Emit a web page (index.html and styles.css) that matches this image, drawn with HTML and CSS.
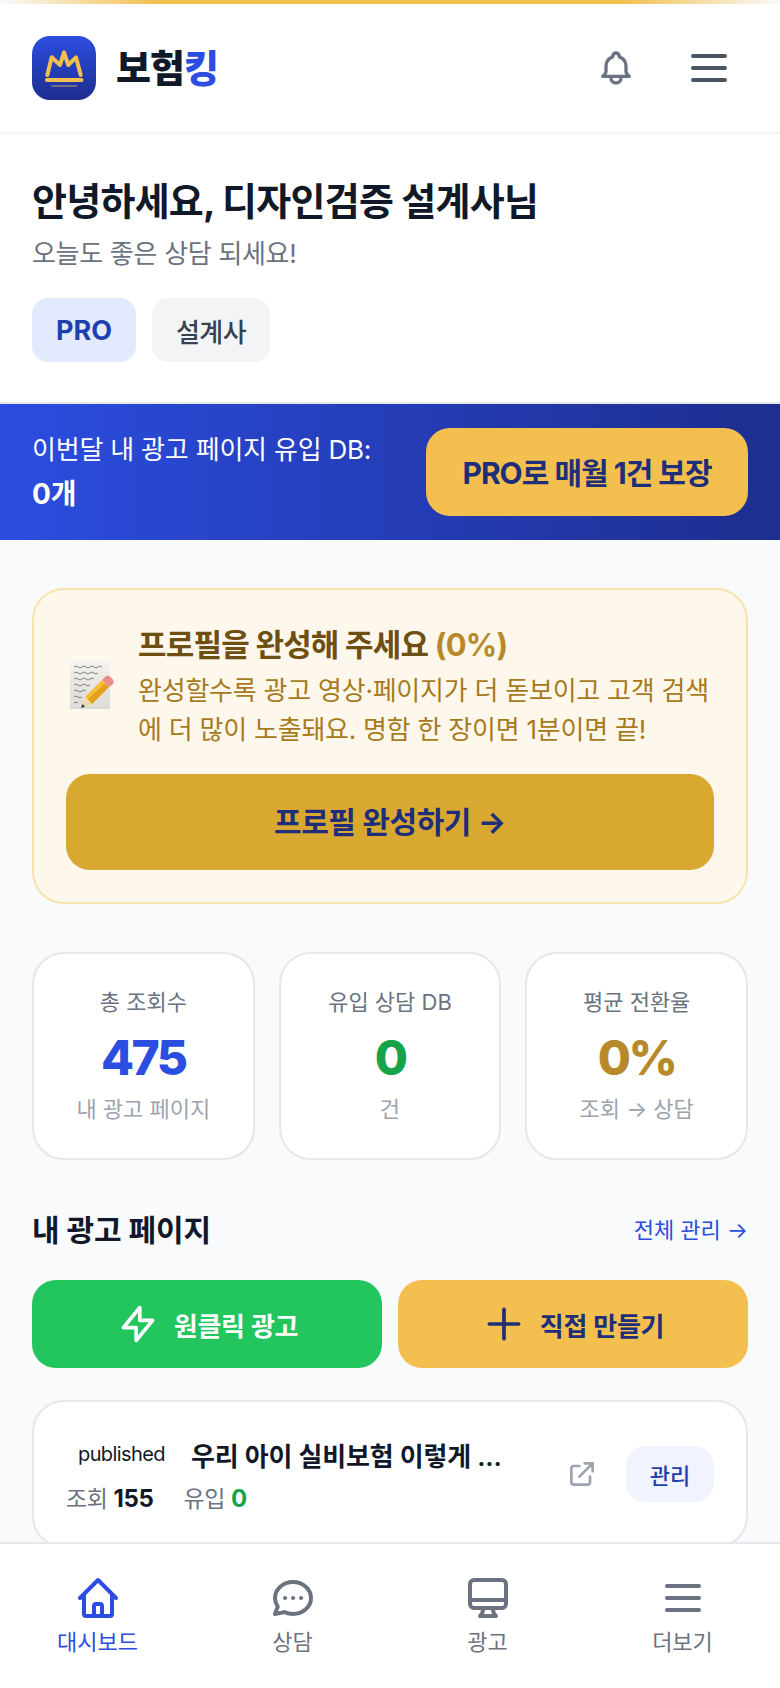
FILE: index.html
```html
<!DOCTYPE html>
<html lang="ko">
<head>
<meta charset="utf-8">
<title>보험킹</title>
<link rel="stylesheet" href="styles.css">
</head>
<body>
<div class="accent-bar"></div>

<header class="topbar">
  <div class="brand">
    <span class="brand-mark">
      <svg viewBox="0 0 64 64" width="64" height="64" fill="none" stroke-linecap="round" stroke-linejoin="round">
        <path class="crown" d="M15.300 39 19.700 21.300 28 29 32 16.300 36.300 29 44 21.300 48.700 39"/>
        <path class="crown" d="M15 44H49.500"/>
        <path class="crown-shadow" d="M20 50H44.500"/>
      </svg>
    </span>
    <span class="brand-name">보험<em>킹</em></span>
  </div>
  <div class="topbar-actions">
    <svg class="bell" viewBox="0 0 24 24" fill="none" stroke-linecap="round" stroke-linejoin="round"><path d="M15 17h5l-1.405-1.405A2.032 2.032 0 0 1 18 14.158V11a6.002 6.002 0 0 0-4-5.659V5a2 2 0 1 0-4 0v.341C7.670 6.165 6 8.388 6 11v3.159c0 .538-.214 1.055-.595 1.436L4 17h5m6 0v1a3 3 0 1 1-6 0v-1m6 0H9"/></svg>
    <svg class="burger" viewBox="0 0 24 24" fill="none" stroke-linecap="round"><path d="M4 6h16M4 12h16M4 18h16"/></svg>
  </div>
</header>

<section class="welcome">
  <h1>안녕하세요, 디자인검증 설계사님</h1>
  <p>오늘도 좋은 상담 되세요!</p>
  <div class="badges">
    <span class="badge badge-pro">PRO</span>
    <span class="badge badge-role">설계사</span>
  </div>
</section>

<section class="promo">
  <p>이번달 내 광고 페이지 유입 DB:<br><strong>0개</strong></p>
  <button class="promo-btn">PRO로 매월 1건 보장</button>
</section>

<main class="content">
  <section class="profile-card">
    <div class="profile-info">
      <!-- memo pad with a pencil resting on it -->
      <svg class="memo" viewBox="0 0 44 48" width="44" height="48">
        <defs>
          <linearGradient id="memoPaper" x1="0" y1="0" x2="0" y2="1">
            <stop offset="0" stop-color="#f4f3f0"/>
            <stop offset="1" stop-color="#dcdad6"/>
          </linearGradient>
        </defs>
        <rect x="0" y="0" width="40" height="48" fill="url(#memoPaper)"/>
        <path class="memo-script" d="M4 6q2-2 4 0t4 0 4 0 4 0 4 0 4 0 4 0M4 12q2-2 4 0t4 0 4 0 4 0 4 0 4 0M4 18q2-2 4 0t4 0 4 0 4 0 4 0M4 24q2-2 4 0t4 0 4 0 4 0M4 30q2-2 4 0t4 0 4 0M4 36q2-2 4 0t4 0M4 42q2-2 4 0"/>
        <path d="M15 36 32 19 39 26 22 43Z" fill="#f7bd33"/>
        <path d="M18 38 35 22.500 39 26 22 43Z" fill="#e39f1f"/>
        <path d="M32 19 35 16a4 4 0 0 1 5.500 0l2 2a4 4 0 0 1 0 5.500L39 26Z" fill="#ea8d88"/>
        <path d="M15 36 11 47 22 43Z" fill="#f3d9a8"/>
        <path d="M12.500 43 11 47 15 45.500Z" fill="#333"/>
      </svg>
      <div>
        <h2>프로필을 완성해 주세요 <span>(0%)</span></h2>
        <p>완성할수록 광고 영상·페이지가 더 돋보이고 고객 검색에 더 많이 노출돼요. 명함 한 장이면 1분이면 끝!</p>
      </div>
    </div>
    <button class="profile-btn">프로필 완성하기 →</button>
  </section>

  <section class="stats">
    <div class="stat">
      <span class="stat-label">총 조회수</span>
      <strong class="stat-value blue">475</strong>
      <span class="stat-note">내 광고 페이지</span>
    </div>
    <div class="stat">
      <span class="stat-label">유입 상담 DB</span>
      <strong class="stat-value green">0</strong>
      <span class="stat-note">건</span>
    </div>
    <div class="stat">
      <span class="stat-label">평균 전환율</span>
      <strong class="stat-value gold">0%</strong>
      <span class="stat-note">조회 → 상담</span>
    </div>
  </section>

  <section class="ads">
    <div class="ads-head">
      <h3>내 광고 페이지</h3>
      <a class="ads-link">전체 관리 →</a>
    </div>
    <div class="ads-actions">
      <button class="action action-green">
        <svg viewBox="0 0 24 24" fill="none" stroke-linecap="round" stroke-linejoin="round"><path d="M13 10V3L4 14h7v7l9-11h-7z"/></svg>
        원클릭 광고
      </button>
      <button class="action action-yellow">
        <svg viewBox="0 0 24 24" fill="none" stroke-linecap="round" stroke-linejoin="round"><path d="M12 4v16m8-8H4"/></svg>
        직접 만들기
      </button>
    </div>
    <article class="ad-card">
      <div class="ad-main">
        <div class="ad-title-row">
          <span class="ad-status">published</span>
          <span class="ad-title">우리 아이 실비보험 이렇게 ...</span>
        </div>
        <div class="ad-metrics">
          <span>조회 <b>155</b></span>
          <span>유입 <b class="green">0</b></span>
        </div>
      </div>
      <svg class="ad-open" viewBox="0 0 24 24" fill="none" stroke-linecap="round" stroke-linejoin="round"><path d="M10 6H6a2 2 0 0 0-2 2v10a2 2 0 0 0 2 2h10a2 2 0 0 0 2-2v-4M14 4h6m0 0v6m0-6L10 14"/></svg>
      <button class="ad-manage">관리</button>
    </article>
  </section>
</main>

<nav class="tabbar">
  <a class="tab tab-active">
    <svg viewBox="0 0 24 24" fill="none" stroke-linecap="round" stroke-linejoin="round"><path d="M3 12l2-2m0 0 7-7 7 7M5 10v10a1 1 0 0 0 1 1h3m10-11 2 2m-2-2v10a1 1 0 0 1-1 1h-3m-6 0a1 1 0 0 0 1-1v-4a1 1 0 0 1 1-1h2a1 1 0 0 1 1 1v4a1 1 0 0 0 1 1m-6 0h6"/></svg>
    대시보드
  </a>
  <a class="tab">
    <svg viewBox="0 0 24 24" fill="none" stroke-linecap="round" stroke-linejoin="round"><path d="M8 12h.01M12 12h.01M16 12h.01M21 12c0 4.418-4.030 8-9 8a9.863 9.863 0 0 1-4.255-.949L3 20l1.395-3.720C3.512 15.042 3 13.574 3 12c0-4.418 4.030-8 9-8s9 3.582 9 8z"/></svg>
    상담
  </a>
  <a class="tab">
    <svg viewBox="0 0 24 24" fill="none" stroke-linecap="round" stroke-linejoin="round"><path d="M9.750 17 9 20l-1 1h8l-1-1-.75-3M3 13h18M5 17h14a2 2 0 0 0 2-2V5a2 2 0 0 0-2-2H5a2 2 0 0 0-2 2v10a2 2 0 0 0 2 2z"/></svg>
    광고
  </a>
  <a class="tab">
    <svg viewBox="0 0 24 24" fill="none" stroke-linecap="round"><path d="M4 6h16M4 12h16M4 18h16"/></svg>
    더보기
  </a>
</nav>
</body>
</html>
```

FILE: styles.css
```css
* { box-sizing: border-box; }

html, body {
  margin: 0;
  height: 1688px;
  overflow: hidden;
}

body {
  background: #f9fafc;
  color: #111827;
  font-family: Inter, "Noto Sans CJK KR", sans-serif;
}

h1, h2, h3, p { margin: 0; }

button {
  border: 0;
  font-family: inherit;
  cursor: pointer;
}

.accent-bar {
  height: 4px;
  background: linear-gradient(90deg, transparent, #f3c04f 20%, #f3c04f 80%, transparent);
}

/* Top bar */
.topbar {
  height: 130px;
  background: #fff;
  border-bottom: 2px solid #f3f4f6;
  padding: 32px 32px 0;
  display: flex;
  justify-content: space-between;
  align-items: flex-start;
}

.brand {
  display: flex;
  align-items: center;
  gap: 20px;
}

.brand-mark {
  width: 64px;
  height: 64px;
  border-radius: 18px;
  background: linear-gradient(180deg, #2b4de0, #1e2e8f);
  display: block;
}

.brand-mark svg { display: block; }

.crown { stroke: #f3c04f; stroke-width: 4; }
.crown-shadow { stroke: #f3c04f; stroke-opacity: .4; stroke-width: 2; }

.brand-name {
  font-size: 38px;
  font-weight: 800;
  letter-spacing: -1px;
  color: #111827;
  line-height: 1;
}

.brand-name em {
  font-style: normal;
  color: #2b4de0;
}

.topbar-actions {
  display: flex;
  align-items: center;
  gap: 49px;
  height: 64px;
  margin-right: 15px;
}

.bell {
  width: 40px;
  height: 40px;
  stroke: #6b7280;
  stroke-width: 2;
}

.burger {
  width: 48px;
  height: 48px;
  stroke: #4b5563;
  stroke-width: 2;
}

/* Welcome */
.welcome {
  height: 270px;
  background: #fff;
  border-bottom: 2px solid #e5e7eb;
  padding: 41px 32px 0;
}

.welcome h1 {
  font-size: 38px;
  font-weight: 700;
  letter-spacing: -.75px;
  line-height: 52px;
}

.welcome p {
  font-size: 26px;
  line-height: 40px;
  color: #6b7280;
  margin-top: 7px;
  letter-spacing: -.3px;
}

.badges {
  display: flex;
  gap: 16px;
  margin-top: 24px;
}

.badge {
  height: 64px;
  border-radius: 16px;
  padding: 0 24px;
  display: flex;
  align-items: center;
}

.badge-pro {
  background: #e4eafd;
  color: #1e3fae;
  font-size: 27px;
  font-weight: 700;
}

.badge-role {
  background: #f3f4f6;
  color: #374151;
  font-size: 26px;
  font-weight: 500;
  letter-spacing: -.6px;
}

/* Promo banner */
.promo {
  height: 136px;
  background: linear-gradient(90deg, #2b4de0, #1e2e8f);
  padding: 0 32px;
  display: flex;
  align-items: center;
  justify-content: space-between;
  color: #fff;
}

.promo p {
  font-size: 26px;
  line-height: 44px;
  letter-spacing: -.2px;
}

.promo strong {
  font-size: 28px;
  font-weight: 700;
}

.promo-btn {
  width: 322px;
  height: 88px;
  border-radius: 24px;
  background: #f3c04f;
  color: #1e2e78;
  font-size: 30px;
  font-weight: 700;
  letter-spacing: -1px;
  padding: 0 0 3px;
}

/* Page content */
.content { padding: 48px 32px 0; }

.profile-card {
  height: 316px;
  border: 2px solid #f7e4ad;
  border-radius: 32px;
  background: #fef8ec;
  padding: 34px 32px 0;
}

.profile-info {
  display: flex;
  align-items: center;
  gap: 24px;
}

.memo {
  flex: none;
  margin-left: 4px;
  margin-top: -4px;
}

.memo-script {
  fill: none;
  stroke: #55534f;
  stroke-width: .7;
}

.profile-info h2 {
  font-size: 31px;
  font-weight: 700;
  line-height: 42px;
  letter-spacing: -.8px;
  color: #6f4e12;
}

.profile-info h2 span { color: #b8892a; }

.profile-info p {
  font-size: 26px;
  line-height: 39px;
  margin-top: 5px;
  color: #a87a20;
  letter-spacing: -.23px;
}

.profile-btn {
  display: block;
  width: 100%;
  height: 96px;
  margin-top: 25px;
  border-radius: 24px;
  background: #d9a830;
  color: #1e2e78;
  font-size: 30px;
  font-weight: 700;
  letter-spacing: -.4px;
  padding: 0 0 4px;
}

.stats {
  display: grid;
  grid-template-columns: repeat(3, 1fr);
  gap: 24px;
  margin-top: 48px;
}

.stat {
  height: 208px;
  background: #fff;
  border: 2px solid #e5e7eb;
  border-radius: 32px;
  padding-bottom: 2px;
  display: flex;
  flex-direction: column;
  align-items: center;
  justify-content: center;
}

.stat-label {
  font-size: 22px;
  line-height: 36px;
  color: #6b7280;
}

.stat-value {
  font-size: 48px;
  line-height: 64px;
  font-weight: 800;
  letter-spacing: -2.500px;
  margin: 6px 0 1px;
}

.stat-note {
  font-size: 22px;
  line-height: 36px;
  color: #9ca3af;
}

.blue { color: #2b4de0; }
.green { color: #16a34a; }
.gold { color: #b8892a; }

/* Ad pages */
.ads { margin-top: 44px; }

.ads-head {
  display: flex;
  justify-content: space-between;
  align-items: center;
  height: 48px;
}

.ads-head h3 {
  font-size: 30px;
  font-weight: 700;
  letter-spacing: -.1px;
}

.ads-link {
  font-size: 22px;
  color: #2b4de0;
}

.ads-actions {
  display: grid;
  grid-template-columns: 1fr 1fr;
  gap: 16px;
  margin-top: 28px;
}

.action {
  height: 88px;
  border-radius: 24px;
  font-size: 26px;
  font-weight: 600;
  letter-spacing: -.3px;
  display: flex;
  align-items: center;
  justify-content: center;
  gap: 14px;
}

.action svg {
  width: 44px;
  height: 44px;
  stroke-width: 2;
}

.action-green {
  background: #22c55e;
  color: #fff;
  stroke: #fff;
}

.action-yellow {
  background: #f3c04f;
  color: #1e2e78;
  stroke: #1e2e78;
}

.ad-card {
  height: 148px;
  margin-top: 32px;
  background: #fff;
  border: 2px solid #e5e7eb;
  border-radius: 32px;
  padding: 0 32px;
  display: flex;
  align-items: center;
}

.ad-main { flex: 1; padding-top: 1px; }

.ad-title-row {
  display: flex;
  align-items: center;
  gap: 26px;
  padding-left: 12px;
}

.ad-status {
  font-size: 20px;
  color: #111827;
  letter-spacing: -.6px;
}

.ad-title {
  font-size: 26px;
  font-weight: 600;
  letter-spacing: -.2px;
}

.ad-metrics {
  display: flex;
  gap: 30px;
  margin-top: 7px;
  font-size: 23px;
  color: #6b7280;
  letter-spacing: -.4px;
}

.ad-metrics b { color: #111827; font-weight: 700; font-size: 24px; }
.ad-metrics b.green { color: #16a34a; }

.ad-open {
  width: 32px;
  height: 32px;
  stroke: #9ca3af;
  stroke-width: 2;
  margin-right: 28px;
}

.ad-manage {
  width: 88px;
  height: 56px;
  border-radius: 20px;
  background: #f1f4fe;
  color: #1e3fae;
  font-size: 22px;
  font-weight: 500;
}

/* Bottom tabs */
.tabbar {
  position: fixed;
  left: 0;
  right: 0;
  bottom: 0;
  height: 146px;
  background: #fff;
  border-top: 2px solid #e5e7eb;
  display: grid;
  grid-template-columns: repeat(4, 1fr);
  padding-top: 30px;
}

.tab {
  display: flex;
  flex-direction: column;
  align-items: center;
  font-size: 22px;
  line-height: 36px;
  color: #6b7280;
}

.tab svg {
  width: 48px;
  height: 48px;
  stroke: currentColor;
  stroke-width: 2;
  margin-bottom: 2px;
}

.tab-active { color: #2b4de0; }
```
